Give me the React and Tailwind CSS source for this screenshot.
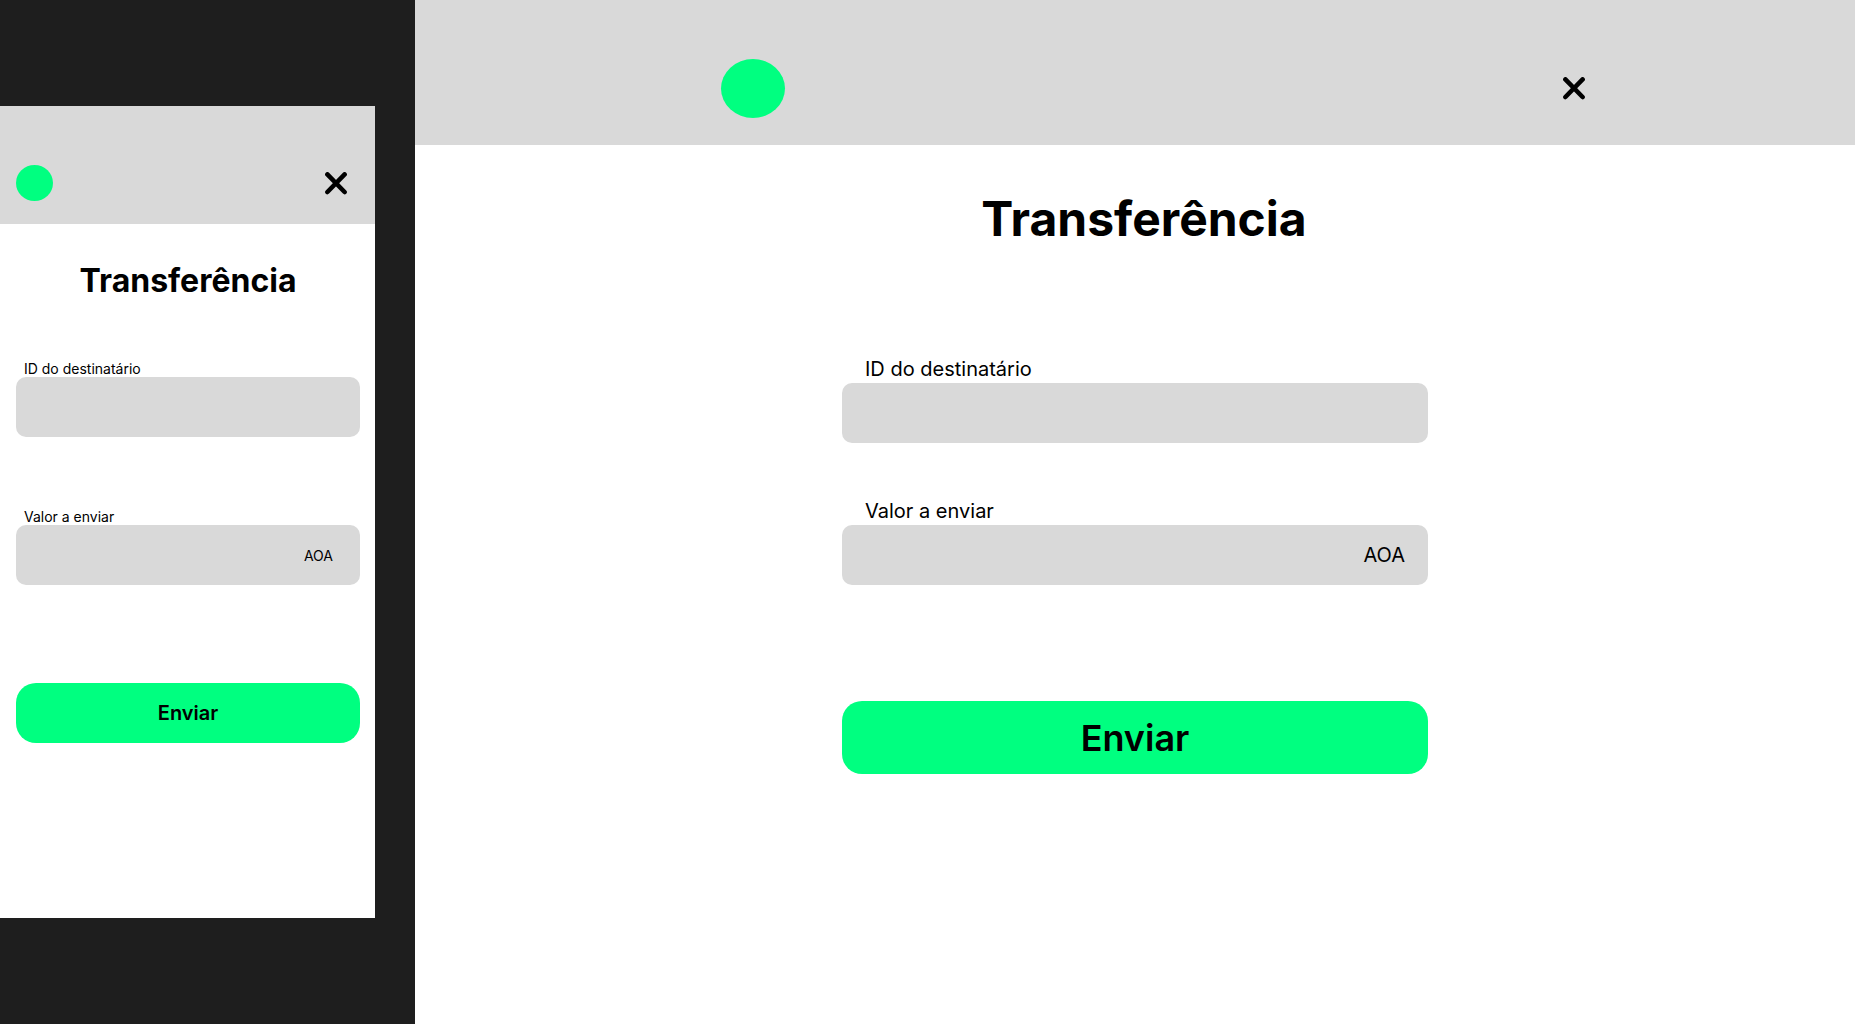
import React from "react";

function CloseButton() {
  return (
    <button type="button" aria-label="Fechar" className="cursor-pointer">
      <svg className="block" width="22" height="23" viewBox="0 0 22 23" fill="none" stroke="#000" strokeWidth="4.6" strokeLinecap="round">
        <path d="M2.4 2.4L19.6 20M19.6 2.4L2.4 20" />
      </svg>
    </button>
  );
}

function MobileScreen() {
  return (
    <section aria-label="Versão móvel" className="min-h-[812px] w-[375px] bg-white">
      <header className="flex items-center justify-between bg-[#d9d9d9] pt-[59px] pr-7 pb-[23px] pl-4">
        <div className="h-9 w-[37px] rounded-[50%] bg-[#00ff80]" />
        <CloseButton />
      </header>
      <form className="flex flex-col pt-[37px] pr-[15px] pl-4" onSubmit={(e) => e.preventDefault()}>
        <h1 className="text-center text-[32px] leading-[39px] font-bold">Transferência</h1>
        <label htmlFor="m-id" className="mt-[60px] pl-2 text-sm leading-[17px]">ID do destinatário</label>
        <input id="m-id" type="text" className="h-[60px] w-full rounded-[10px] bg-[#d9d9d9] px-4 text-sm outline-none" />
        <label htmlFor="m-valor" className="mt-[71px] pl-2 text-sm leading-[17px]">Valor a enviar</label>
        <div className="flex h-[60px] items-center rounded-[10px] bg-[#d9d9d9] pr-[27px] pl-4">
          <input id="m-valor" type="text" inputMode="decimal" className="min-w-0 flex-1 bg-transparent text-sm outline-none" />
          <span className="text-sm leading-[17px]">AOA</span>
        </div>
        <button type="submit" className="mt-[98px] h-[60px] cursor-pointer rounded-[20px] bg-[#00ff80] text-xl font-semibold">Enviar</button>
      </form>
    </section>
  );
}

function DesktopScreen() {
  return (
    <section aria-label="Versão desktop" className="min-w-0 flex-1 bg-white">
      <header className="grid grid-cols-[306fr_864fr_270fr] bg-[#d9d9d9] pt-[59px] pb-[27px]">
        <div className="col-start-2 flex items-center justify-between">
          <div className="h-[59px] w-16 rounded-[50%] bg-[#00ff80]" />
          <CloseButton />
        </div>
      </header>
      <form className="mx-auto flex max-w-[586px] flex-col pt-[45px]" onSubmit={(e) => e.preventDefault()}>
        <h1 className="pl-[18px] text-center text-5xl leading-[58px] font-bold">Transferência</h1>
        <label htmlFor="d-id" className="mt-[109px] pb-0.5 pl-[23px] text-xl leading-6">ID do destinatário</label>
        <input id="d-id" type="text" className="h-[60px] w-full rounded-[10px] bg-[#d9d9d9] px-[23px] text-xl outline-none" />
        <label htmlFor="d-valor" className="mt-14 pb-0.5 pl-[23px] text-xl leading-6">Valor a enviar</label>
        <div className="flex h-[60px] items-center rounded-[10px] bg-[#d9d9d9] px-[23px]">
          <input id="d-valor" type="text" inputMode="decimal" className="min-w-0 flex-1 bg-transparent text-xl outline-none" />
          <span className="text-xl leading-6">AOA</span>
        </div>
        <button type="submit" className="mt-[116px] h-[73px] cursor-pointer rounded-[20px] bg-[#00ff80] text-4xl font-semibold">Enviar</button>
      </form>
    </section>
  );
}

export default function App() {
  return (
    <main className="flex min-h-screen gap-10 bg-[#1e1e1e] font-['Inter',sans-serif] text-black">
      <div className="flex shrink-0 flex-col justify-center">
        <MobileScreen />
      </div>
      <DesktopScreen />
    </main>
  );
}
